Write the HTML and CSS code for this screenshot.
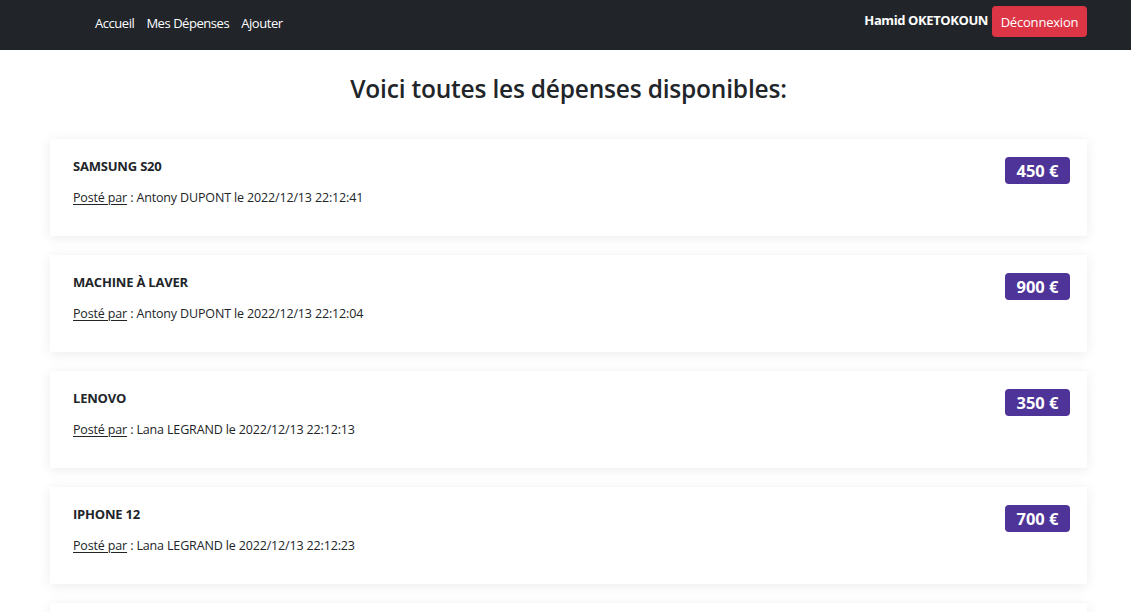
FILE: index.html
```html
<!DOCTYPE html>
<html lang="fr">
<head>
<meta charset="utf-8">
<title>Dépenses</title>
<link rel="stylesheet" href="styles.css">
</head>
<body>
<nav class="navbar">
  <ul class="nav-links">
    <li><a href="#">Accueil</a></li>
    <li><a href="#">Mes Dépenses</a></li>
    <li><a href="#">Ajouter</a></li>
  </ul>
  <div class="nav-right">
    <span class="user">Hamid OKETOKOUN</span>
    <button class="btn-logout">Déconnexion</button>
  </div>
</nav>
<main class="content">
  <h1 class="title">Voici toutes les dépenses disponibles:</h1>
  <div class="list">
    <div class="card">
      <div class="card-body">
        <div class="card-title">SAMSUNG S20</div>
        <div class="meta"><u>Posté par</u> : Antony DUPONT le 2022/12/13 22:12:41</div>
      </div>
      <span class="badge">450 €</span>
    </div>
    <div class="card">
      <div class="card-body">
        <div class="card-title">MACHINE À LAVER</div>
        <div class="meta"><u>Posté par</u> : Antony DUPONT le 2022/12/13 22:12:04</div>
      </div>
      <span class="badge">900 €</span>
    </div>
    <div class="card">
      <div class="card-body">
        <div class="card-title">LENOVO</div>
        <div class="meta"><u>Posté par</u> : Lana LEGRAND le 2022/12/13 22:12:13</div>
      </div>
      <span class="badge">350 €</span>
    </div>
    <div class="card">
      <div class="card-body">
        <div class="card-title">IPHONE 12</div>
        <div class="meta"><u>Posté par</u> : Lana LEGRAND le 2022/12/13 22:12:23</div>
      </div>
      <span class="badge">700 €</span>
    </div>
    <div class="card card-partial"></div>
  </div>
</main>
</body>
</html>
```

FILE: styles.css
```css
* { box-sizing: border-box; }
html, body { margin: 0; padding: 0; }
body {
  font-family: "Open Sans", "Noto Sans", sans-serif;
  color: #212529;
  background: #fff;
}
.navbar {
  height: 50px;
  background: #212529;
  display: flex;
  justify-content: space-between;
  align-items: flex-start;
  padding: 6px 44px 0 95px;
}
.nav-links {
  list-style: none;
  margin: 0;
  padding: 0;
  display: flex;
  gap: 12px;
  height: 31px;
  align-items: center;
}
.nav-links a {
  color: #fff;
  text-decoration: none;
  font-size: 13px;
  letter-spacing: -0.45px;
}
.nav-right {
  display: flex;
  align-items: center;
  gap: 4px;
  height: 31px;
}
.user {
  color: #fff;
  font-weight: 700;
  font-size: 13px;
  letter-spacing: -0.4px;
  margin-top: -4px;
}
.btn-logout {
  background: #dc3545;
  color: #fff;
  border: none;
  border-radius: 4px;
  height: 31px;
  width: 95px;
  font-family: inherit;
  font-size: 13px;
  letter-spacing: -0.2px;
  padding: 0;
}
.content {
  padding: 0 44px 0 50px;
}
.title {
  text-align: center;
  font-size: 24.5px;
  font-weight: 600;
  margin: 0;
  padding: 22px 0 0;
  height: 89px;
  letter-spacing: -0.2px;
  color: #212529;
}
.list {
  display: flex;
  flex-direction: column;
  gap: 19px;
}
.card {
  display: flex;
  justify-content: space-between;
  align-items: flex-start;
  height: 97px;
  padding: 18px 17px 0 23px;
  background: #fff;
  box-shadow: 0 2px 12px rgba(0, 0, 0, 0.08);
}
.card-title {
  font-weight: 700;
  font-size: 13px;
  letter-spacing: -0.2px;
  line-height: 18px;
}
.meta {
  margin-top: 14px;
  font-size: 12.5px;
  letter-spacing: -0.15px;
  line-height: 18px;
}
.meta u { text-underline-offset: 2px; }
.badge {
  background: #4e3499;
  color: #fff;
  font-weight: 700;
  font-size: 16.5px;
  border-radius: 4px;
  height: 27px;
  width: 65px;
  display: flex;
  align-items: center;
  justify-content: center;
}
```
